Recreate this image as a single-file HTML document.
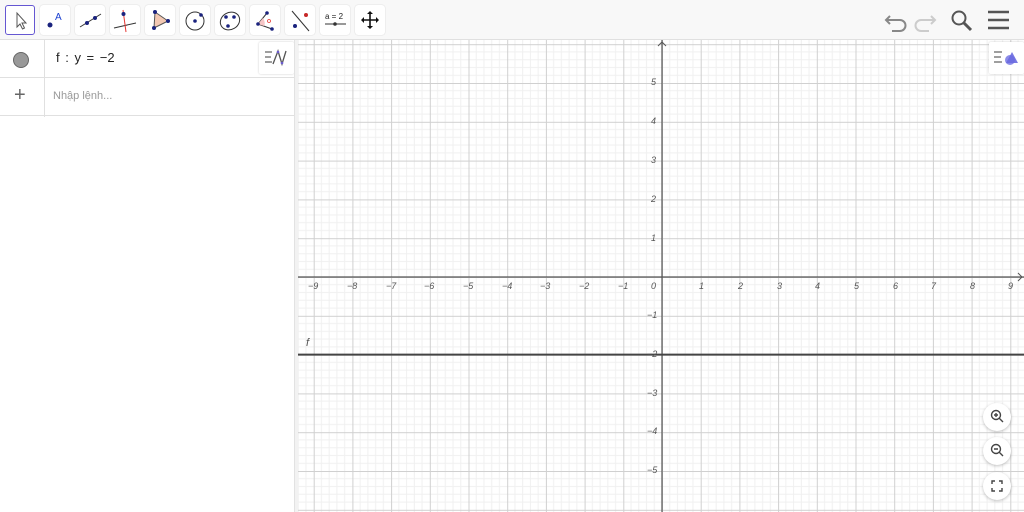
<!DOCTYPE html>
<html><head><meta charset="utf-8"><style>
*{margin:0;padding:0;box-sizing:border-box}
body{width:1024px;height:512px;overflow:hidden;background:#fff;font-family:"Liberation Sans",sans-serif;position:relative}
.tb{position:absolute;left:0;top:0;width:1024px;height:40px;background:#f8f8f8;border-bottom:1px solid #e0e0e0}
.btn{position:absolute;top:5px;width:30px;height:30px;background:#fff;border-radius:3px;box-shadow:0 0 1px rgba(0,0,0,.25)}
.btn svg{position:absolute;left:0;top:0}
.alg{position:absolute;left:0;top:40px;width:294px;height:472px;background:#fff}
.div{position:absolute;left:294px;top:40px;width:4px;height:472px;background:#f2f2f2;border-left:1px solid #e2e2e2}
.row{position:absolute;left:0;width:294px;border-bottom:1px solid #e0e0e0}
.lbl{position:absolute;font-style:italic;font-size:9px;color:#555}
.zb{position:absolute;left:983px;width:28px;height:28px;border-radius:50%;background:#fff;box-shadow:0 1px 3px rgba(0,0,0,.25)}
</style></head><body>
<svg style="position:absolute;left:298px;top:40px" width="726" height="472">
<defs>
<pattern id="g" patternUnits="userSpaceOnUse" x="364" y="237" width="38.7" height="38.8">
<g stroke="#f0f0f0" stroke-width="1">
<line x1="7.74" y1="0" x2="7.74" y2="38.8"/><line x1="15.48" y1="0" x2="15.48" y2="38.8"/><line x1="23.22" y1="0" x2="23.22" y2="38.8"/><line x1="30.96" y1="0" x2="30.96" y2="38.8"/>
<line y1="7.76" x1="0" y2="7.76" x2="38.7"/><line y1="15.52" x1="0" y2="15.52" x2="38.7"/><line y1="23.28" x1="0" y2="23.28" x2="38.7"/><line y1="31.04" x1="0" y2="31.04" x2="38.7"/>
</g>
<line x1="0.5" y1="0" x2="0.5" y2="38.8" stroke="#d0d0d0"/><line x1="0" y1="0.5" x2="38.7" y2="0.5" stroke="#d0d0d0"/>
</pattern></defs>
<rect width="726" height="472" fill="url(#g)"/>
<line x1="0" y1="237" x2="726" y2="237" stroke="#555" stroke-width="1.2"/>
<line x1="364" y1="0" x2="364" y2="472" stroke="#555" stroke-width="1.2"/>
<path d="M360 6 L364 2 L368 6" fill="none" stroke="#555"/>
<path d="M720 233 L724 237 L720 241" fill="none" stroke="#555"/>
<line x1="0" y1="314.6" x2="726" y2="314.6" stroke="#444" stroke-width="2"/>
</svg>
<div class="lbl" style="left:306px;top:337px;font-size:11px">f</div>
<div class="lbl" style="left:651px;top:281px">0</div>
<div class="lbl" style="left:308px;top:281px">−9</div><div class="lbl" style="left:347px;top:281px">−8</div><div class="lbl" style="left:386px;top:281px">−7</div><div class="lbl" style="left:424px;top:281px">−6</div><div class="lbl" style="left:463px;top:281px">−5</div><div class="lbl" style="left:502px;top:281px">−4</div><div class="lbl" style="left:540px;top:281px">−3</div><div class="lbl" style="left:579px;top:281px">−2</div><div class="lbl" style="left:618px;top:281px">−1</div>
<div class="lbl" style="left:699px;top:281px">1</div><div class="lbl" style="left:738px;top:281px">2</div><div class="lbl" style="left:777px;top:281px">3</div><div class="lbl" style="left:815px;top:281px">4</div><div class="lbl" style="left:854px;top:281px">5</div><div class="lbl" style="left:893px;top:281px">6</div><div class="lbl" style="left:931px;top:281px">7</div><div class="lbl" style="left:970px;top:281px">8</div><div class="lbl" style="left:1008px;top:281px">9</div>
<div class="lbl" style="left:651px;top:77px">5</div><div class="lbl" style="left:651px;top:116px">4</div><div class="lbl" style="left:651px;top:155px">3</div><div class="lbl" style="left:651px;top:194px">2</div><div class="lbl" style="left:651px;top:233px">1</div>
<div class="lbl" style="left:647px;top:310px">−1</div><div class="lbl" style="left:647px;top:349px">−2</div><div class="lbl" style="left:647px;top:388px">−3</div><div class="lbl" style="left:647px;top:426px">−4</div><div class="lbl" style="left:647px;top:465px">−5</div>

<div class="tb">
<div class="btn" style="left:5px;border:1.5px solid #6557d2;box-shadow:none"><svg width="30" height="30"><path d="M11 7 L11 21 L14 18 L16.5 23 L18.5 22 L16 17 L20 17 Z" fill="#fff" stroke="#555" stroke-width="1"/></svg></div>
<div class="btn" style="left:40px"><svg width="30" height="30"><circle cx="10" cy="20" r="2.5" fill="#1a237e"/><text x="15" y="15" font-size="10" fill="#1a3fd0" font-family="Liberation Sans">A</text></svg></div>
<div class="btn" style="left:75px"><svg width="30" height="30"><line x1="5" y1="22" x2="26" y2="9" stroke="#333"/><circle cx="12" cy="18" r="2" fill="#1a237e"/><circle cx="20" cy="13" r="2" fill="#1a237e"/></svg></div>
<div class="btn" style="left:110px"><svg width="30" height="30"><line x1="4" y1="23" x2="26" y2="18" stroke="#333"/><line x1="13" y1="5" x2="16" y2="27" stroke="#e53935"/><circle cx="13.5" cy="9" r="2" fill="#1a237e"/></svg></div>
<div class="btn" style="left:145px"><svg width="30" height="30"><path d="M10 7 L23 16 L9 23 Z" fill="#f3c8b3" stroke="#555"/><circle cx="10" cy="7" r="2" fill="#1a237e"/><circle cx="23" cy="16" r="2" fill="#1a237e"/><circle cx="9" cy="23" r="2" fill="#1a237e"/></svg></div>
<div class="btn" style="left:180px"><svg width="30" height="30"><circle cx="15" cy="16" r="9" fill="none" stroke="#333"/><circle cx="15" cy="16" r="1.8" fill="#1a237e"/><circle cx="21" cy="10" r="1.8" fill="#1a237e"/></svg></div>
<div class="btn" style="left:215px"><svg width="30" height="30"><ellipse cx="15" cy="16" rx="10" ry="8.5" transform="rotate(-30 15 16)" fill="none" stroke="#333"/><circle cx="11" cy="12" r="1.8" fill="#1a237e"/><circle cx="19" cy="12" r="1.8" fill="#1a237e"/><circle cx="13" cy="21" r="1.8" fill="#1a237e"/></svg></div>
<div class="btn" style="left:250px"><svg width="30" height="30"><path d="M17 8 L8 19 L22 24" fill="none" stroke="#333"/><path d="M13 13 Q16 18 14 21 L8 19Z" fill="#f6c6c6"/><circle cx="17" cy="8" r="1.8" fill="#1a237e"/><circle cx="8" cy="19" r="1.8" fill="#1a237e"/><circle cx="22" cy="24" r="1.8" fill="#1a237e"/><circle cx="19" cy="16" r="1.5" fill="none" stroke="#e53935" stroke-width=".8"/></svg></div>
<div class="btn" style="left:285px"><svg width="30" height="30"><line x1="7" y1="6" x2="24" y2="26" stroke="#333"/><circle cx="21" cy="10" r="2" fill="#c62828"/><circle cx="10" cy="21" r="2" fill="#1a237e"/></svg></div>
<div class="btn" style="left:320px"><svg width="30" height="30"><text x="5" y="14" font-size="8" fill="#222" font-family="Liberation Sans">a = 2</text><line x1="5" y1="19" x2="26" y2="19" stroke="#333"/><circle cx="15" cy="19" r="1.8" fill="#333"/></svg></div>
<div class="btn" style="left:355px"><svg width="30" height="30"><path d="M15 7 V23 M7 15 H23" stroke="#111" stroke-width="1.6"/><path d="M12 9 L15 6 L18 9Z M12 21 L15 24 L18 21Z M9 12 L6 15 L9 18Z M21 12 L24 15 L21 18Z" fill="#111"/></svg></div>
<svg style="position:absolute;left:884px;top:8px" width="140" height="26">
<path d="M6 8 L2 12 L6 16 M2 12 H16 A5.5 5.5 0 0 1 16 23 H8" fill="none" stroke="#888" stroke-width="2"/>
<path d="M47 8 L51 12 L47 16 M51 12 H37 A5.5 5.5 0 0 0 37 23 H45" fill="none" stroke="#ccc" stroke-width="2"/>
<circle cx="75" cy="10" r="6.5" fill="none" stroke="#555" stroke-width="2"/><line x1="80" y1="15" x2="87" y2="22" stroke="#555" stroke-width="3"/>
<path d="M104 4 H125 M104 12 H125 M104 20 H125" stroke="#555" stroke-width="2.5"/>
</svg>
</div>
<div class="alg">
<div class="row" style="top:0;height:38px"><div style="position:absolute;left:13px;top:12px;width:16px;height:16px;border-radius:50%;background:#999;border:1px solid #666"></div><div style="position:absolute;left:44px;top:0;width:1px;height:77px;background:#e0e0e0"></div><div style="position:absolute;left:56px;top:10px;font-size:13px;color:#222;word-spacing:2px">f : y = −2</div></div>
<div class="row" style="top:38px;height:38px"><div style="position:absolute;left:14px;top:6px;font-size:20px;color:#666">+</div><div style="position:absolute;left:53px;top:12px;font-size:11px;color:#999">Nhập lệnh...</div></div>
<div style="position:absolute;left:259px;top:2px;width:35px;height:32px;background:#fff;box-shadow:0 0 2px rgba(0,0,0,.2);border-radius:2px"><svg width="35" height="32"><path d="M6 10 H13 M6 15 H12 M6 20 H13" stroke="#666" stroke-width="1.3"/><path d="M14 22 L19 9 L23 22 L27 9" fill="none" stroke="#555" stroke-width="1.3"/><circle cx="19" cy="10" r="1.3" fill="#6a5acd"/><circle cx="23" cy="21" r="1.3" fill="#6a5acd"/></svg></div>
</div>
<div class="div"></div>
<div style="position:absolute;left:989px;top:42px;width:35px;height:32px;background:#fff;box-shadow:0 0 2px rgba(0,0,0,.2);border-radius:2px"><svg width="35" height="32"><path d="M5 10 H13 M5 15 H12 M5 20 H13" stroke="#666" stroke-width="1.3"/><circle cx="21" cy="18" r="5" fill="#8c8ce8"/><path d="M17 21 L23 10 L29 21Z" fill="#6a6ae0" opacity=".9"/></svg></div>
<div class="zb" style="top:403px"><svg width="28" height="28"><circle cx="13" cy="12" r="4.5" fill="none" stroke="#444" stroke-width="1.4"/><path d="M16 15 L20 19 M11 12 H15 M13 10 V14" stroke="#444" stroke-width="1.4"/></svg></div>
<div class="zb" style="top:437px"><svg width="28" height="28"><circle cx="13" cy="12" r="4.5" fill="none" stroke="#444" stroke-width="1.4"/><path d="M16 15 L20 19 M11 12 H15" stroke="#444" stroke-width="1.4"/></svg></div>
<div class="zb" style="top:472px"><svg width="28" height="28"><path d="M9 12 V9 H12 M16 9 H19 V12 M19 16 V19 H16 M12 19 H9 V16" fill="none" stroke="#444" stroke-width="1.4"/></svg></div>
</body></html>
